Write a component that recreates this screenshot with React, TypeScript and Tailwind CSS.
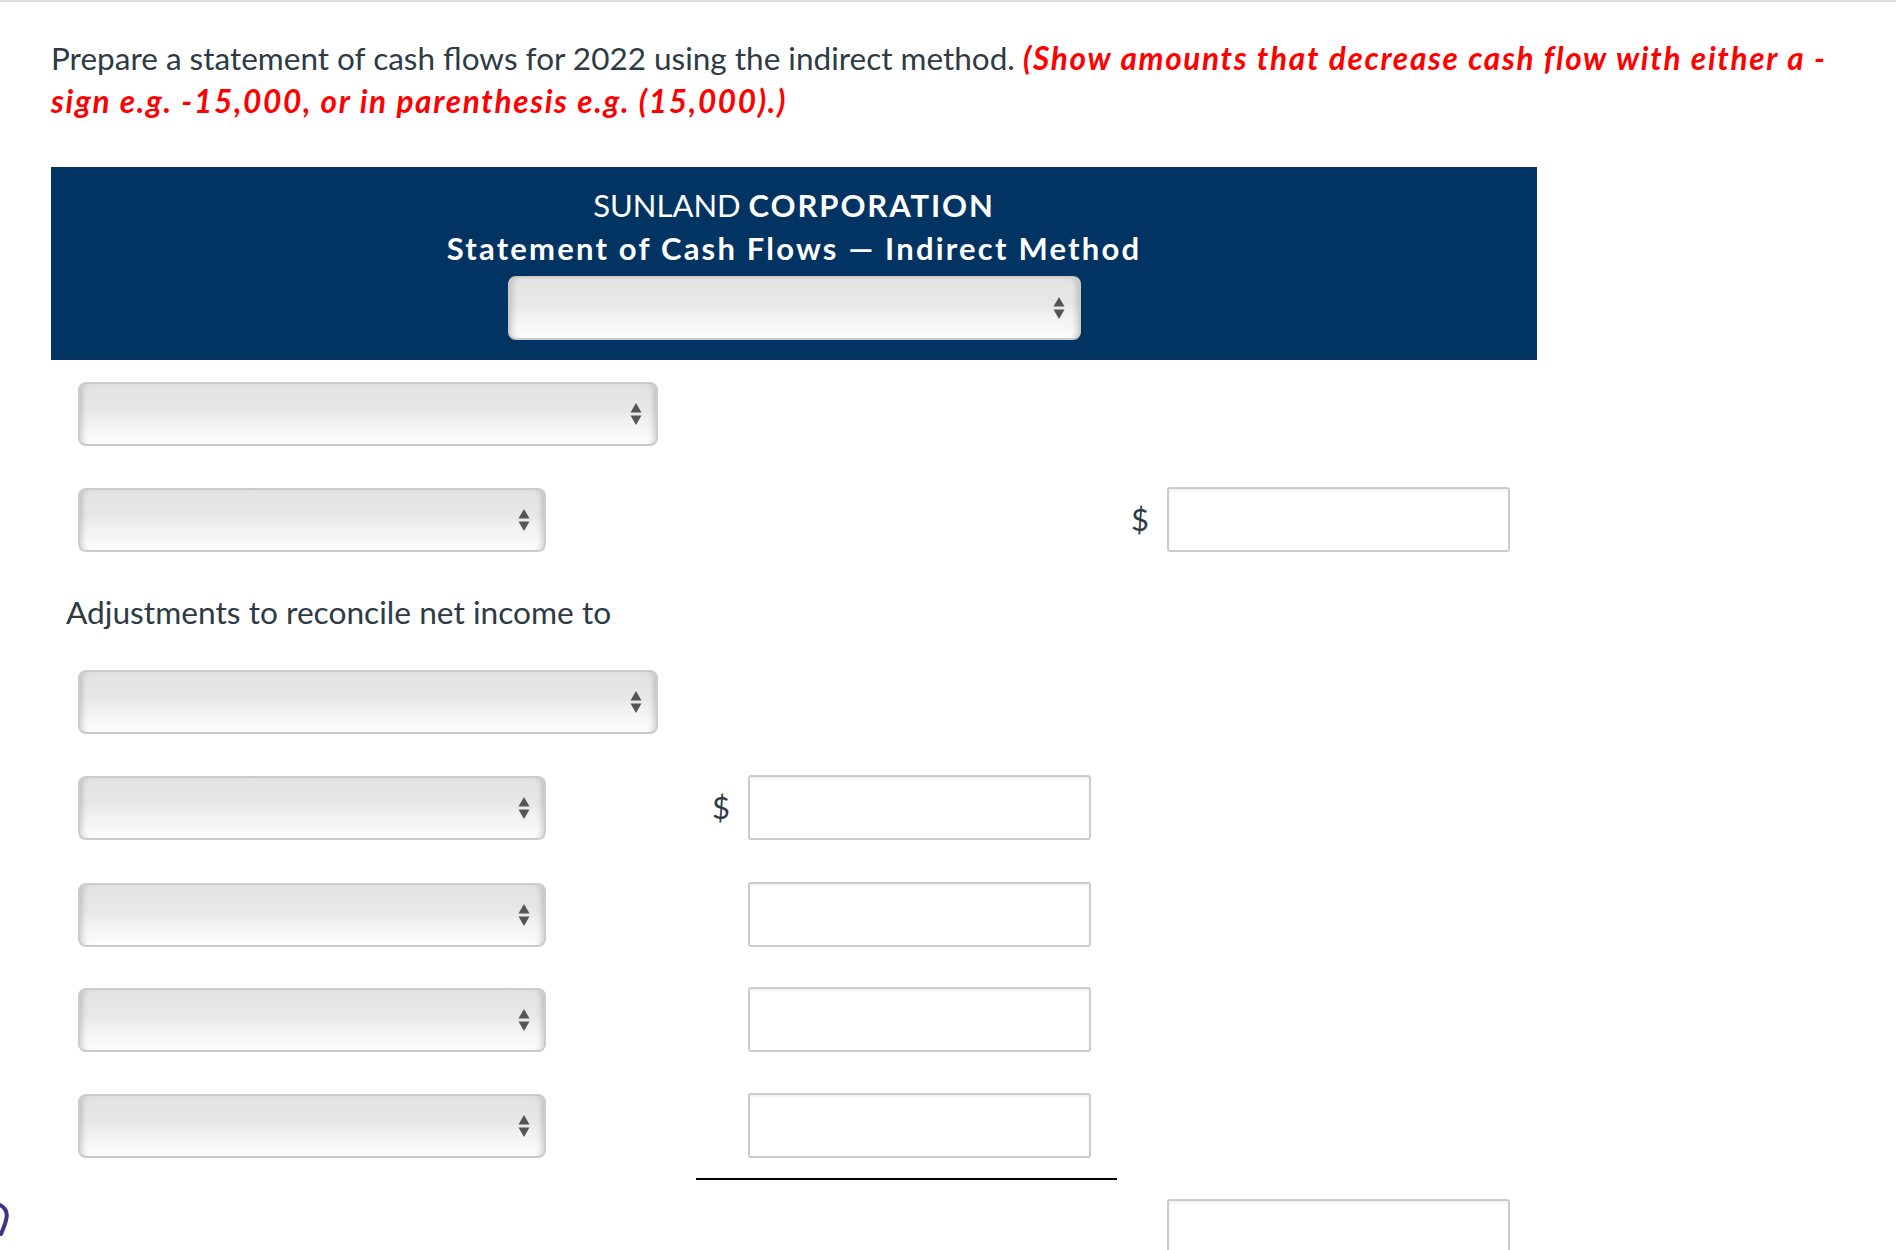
import React from "react";

function Arrows() {
  return (
    <svg width="12" height="24" viewBox="0 0 12 24" className="shrink-0">
      <path d="M6 1 L11.5 10.5 L0.5 10.5 Z" fill="#555555" />
      <path d="M0.5 13.5 L11.5 13.5 L6 23 Z" fill="#555555" />
    </svg>
  );
}

function Select({ wide = false }: { wide?: boolean }) {
  return (
    <div
      className={`${wide ? "w-[580px]" : "w-[468px]"} h-[64px] flex items-center justify-end pr-[14px] rounded-[8px] border-2 border-[#cbcbcb] bg-[linear-gradient(to_bottom,#e2e2e2_0%,#e8e8e8_45%,#f0f0f0_60%,#fdfdfd_100%)] shadow-[inset_7px_0_6px_-5px_rgba(0,0,0,0.18),inset_-7px_0_6px_-5px_rgba(0,0,0,0.18)]`}
    >
      <Arrows />
    </div>
  );
}

function Amount({ dollar = false }: { dollar?: boolean }) {
  return (
    <div className="flex items-center gap-[18px]">
      {dollar && <span className="text-[31px] text-[#2d3b45]">$</span>}
      <div className="w-[343px] h-[65px] rounded-[3px] border-2 border-[#cccccc] bg-white shadow-[inset_0_2px_2px_rgba(0,0,0,0.05)]" />
    </div>
  );
}

function Row({
  wide,
  select = true,
  mid,
  right,
  className = "",
}: {
  wide?: boolean;
  select?: boolean;
  mid?: React.ReactNode;
  right?: React.ReactNode;
  className?: string;
}) {
  return (
    <div className={`grid grid-cols-[645px_421px_420px] items-center h-[65px] ${className}`}>
      <div className="pl-[27px]">{select && <Select wide={wide} />}</div>
      <div className="flex justify-end pr-[26px]">{mid}</div>
      <div className="flex justify-end pr-[27px]">{right}</div>
    </div>
  );
}

export default function App() {
  return (
    <div className="relative min-h-screen bg-white font-['Lato',sans-serif] text-[#2d3b45] overflow-hidden">
      <div className="h-[2px] bg-[#dddddd]" />

      <div className="px-[51px] pt-[35px]">
        {/* Instructions */}
        <p className="text-[31.5px] leading-[43px]">
          Prepare a statement of cash flows for 2022 using the indirect method.{" "}
          <span className="font-bold italic text-[#ff0000] tracking-[1.7px]">
            (Show amounts that decrease cash flow with either a - sign e.g. -15,000, or in parenthesis e.g. (15,000).)
          </span>
        </p>

        <div className="mt-[44px] w-[1486px]">
          {/* Header */}
          <div className="bg-[#013363] text-white text-center pt-[17px] pb-[20px]">
            <div className="text-[31px] leading-[43px]">
              SUNLAND <span className="font-bold tracking-[1.9px]">CORPORATION</span>
            </div>
            <div className="text-[31px] leading-[43px] font-bold tracking-[2.2px]">
              Statement of Cash Flows — Indirect Method
            </div>
            <div className="mt-[6px] flex justify-center">
              <div className="w-[573px] h-[64px] flex items-center justify-end pr-[14px] rounded-[8px] border-2 border-[#cbcbcb] bg-[linear-gradient(to_bottom,#e2e2e2_0%,#e8e8e8_45%,#f0f0f0_60%,#fdfdfd_100%)] shadow-[inset_7px_0_6px_-5px_rgba(0,0,0,0.18),inset_-7px_0_6px_-5px_rgba(0,0,0,0.18)]">
                <Arrows />
              </div>
            </div>
          </div>

          {/* Body */}
          <Row wide className="mt-[21px]" />
          <Row className="mt-[41px]" right={<Amount dollar />} />

          <div className="mt-[40px] pl-[15px] text-[31.7px] leading-[40px]">
            Adjustments to reconcile net income to
          </div>

          <Row wide className="mt-[37px]" />
          <Row className="mt-[41px]" mid={<Amount dollar />} />
          <Row className="mt-[42px]" mid={<Amount />} />
          <Row className="mt-[40px]" mid={<Amount />} />
          <Row className="mt-[41px]" mid={<Amount />} />

          <div className="mt-[20px] grid grid-cols-[645px_421px_420px]">
            <div />
            <div className="h-[2px] bg-black" />
          </div>

          <Row className="mt-[19px]" select={false} right={<Amount />} />
        </div>
      </div>

      {/* partial widget at left edge */}
      <svg className="absolute left-0 top-[1200px]" width="12" height="40" viewBox="0 0 12 40">
        <path d="M0 5 C 6 8, 8 13, 6 20 C 5 25, 3 29, 1 34" stroke="#3c3584" strokeWidth="4" fill="none" strokeLinecap="round" />
      </svg>
    </div>
  );
}
